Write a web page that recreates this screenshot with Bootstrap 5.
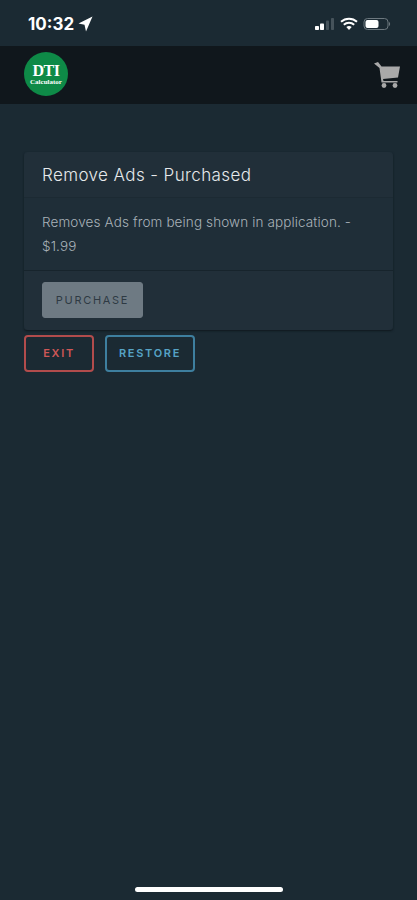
<!DOCTYPE html>
<html lang="en">
<head>
  <meta charset="UTF-8">
  <title>Remove Ads</title>
  <meta name="viewport" content="width=device-width, initial-scale=1">
  <link href="https://cdn.jsdelivr.net/npm/bootstrap@5.3.3/dist/css/bootstrap.min.css" rel="stylesheet">
  <style>
    html, body { height: 100%; }
    body { background: #1b2a33; font-family: "Inter", "Liberation Sans", sans-serif; color: #dfe3e6; }
    .page-wrap { height: 900px; overflow: hidden; }
    .status-row { height: 46px; padding: 10px 26px 0 28px; color: #fff; }
    .status-time { font-size: 17px; font-weight: 700; line-height: 28px; }
    .status-icons { gap: 5px; padding-top: 7px; }
    .top-bar { height: 58px; background: #10171c; padding: 0 17px 0 24px; }
    .app-logo { width: 44px; height: 44px; border-radius: 50%; background: #0e8a47; color: #fff; margin-top: -2px; }
    .logo-big { font-family: "Liberation Serif", serif; font-weight: 700; font-size: 16px; line-height: 15px; letter-spacing: -.5px; }
    .logo-small { font-family: "Liberation Serif", serif; font-weight: 700; font-size: 7px; line-height: 8px; }
    .content-area { padding: 48px 24px 0; }
    .ads-card { background: #1f2e38; border: 0; border-radius: 3px; box-shadow: 0 1px 2px #0f181e; }
    .ads-card .card-header { background: #212f39; border-bottom: 1px solid #1c2a33; height: 46px; padding: 0 18px; font-size: 17px; font-weight: 300; line-height: 46px; letter-spacing: .4px; color: #e6e9eb; }
    .ads-card .card-body { padding: 12px 18px 0; height: 72px; font-size: 13.5px; font-weight: 300; line-height: 24px; letter-spacing: .12px; color: #a9b2b8; }
    .ads-card .card-footer { background: #212f39; border-top: 1px solid #17242c; height: 60px; padding: 11px 18px 0; }
    .btn-buy, .btn-exit, .btn-restore { font-size: 11px; letter-spacing: 1.7px; text-transform: uppercase; padding: 0; }
    .btn-buy { width: 101px; height: 36px; border-radius: 3px; font-weight: 400; }
    .btn-buy:disabled { background: #6e7a83; border: 1px solid #6e7a83; color: #2e3a43; opacity: 1; }
    .exit-row { margin-top: 5px; gap: 11px; }
    .btn-exit { width: 70px; height: 37px; border: 2px solid #b24c4c; border-radius: 4px; color: #cf5757; background: transparent; font-weight: 600; }
    .btn-restore { width: 90px; height: 37px; border: 2px solid #3e7f9f; border-radius: 4px; color: #56a3c6; background: transparent; font-weight: 600; }
    .home-line { position: fixed; left: 135px; top: 887px; width: 148px; height: 5px; border-radius: 3px; background: #fff; }
  </style>
</head>
<body>
  <div class="page-wrap">
    <div class="status-row d-flex justify-content-between align-items-start">
      <div class="d-flex align-items-center gap-1">
        <span class="status-time">10:32</span>
        <svg width="15" height="16" viewBox="0 0 15 16"><path d="M14.500 .5 L.5 7.500 L6.500 8.800 L8 15.500 Z" fill="#fff"/></svg>
      </div>
      <div class="status-icons d-flex align-items-start">
        <svg width="20" height="14" viewBox="0 0 20 14">
          <rect x="0" y="9" width="4" height="4" rx=".8" fill="#fff"/>
          <rect x="5" y="6.500" width="4" height="6.500" rx=".8" fill="#fff"/>
          <rect x="11" y="3.500" width="3" height="9.500" rx=".8" fill="#46535b"/>
          <rect x="16" y="1" width="3" height="12" rx=".8" fill="#46535b"/>
        </svg>
        <svg width="18" height="14" viewBox="0 0 18 14">
          <path d="M1 4.800 C5.500 .6 12.500 .6 17 4.800" fill="none" stroke="#fff" stroke-width="2"/>
          <path d="M3.800 7.700 C6.800 5 11.200 5 14.200 7.700" fill="none" stroke="#fff" stroke-width="2"/>
          <path d="M6.300 10 L9 13 L11.700 10 C10 8.700 8 8.700 6.300 10 Z" fill="#fff"/>
        </svg>
        <svg width="28" height="14" viewBox="0 0 28 14">
          <rect x="1" y="1.500" width="24" height="11" rx="3.500" fill="none" stroke="#6d787f"/>
          <rect x="2.500" y="3" width="13" height="8" rx="2" fill="#fff"/>
          <path d="M26 5 C27.500 5.500 27.500 8.500 26 9 Z" fill="#6d787f"/>
        </svg>
      </div>
    </div>

    <nav class="top-bar d-flex justify-content-between align-items-center">
      <div class="app-logo d-flex flex-column align-items-center justify-content-center">
        <span class="logo-big">DTI</span>
        <span class="logo-small">Calculator</span>
      </div>
      <svg width="26" height="26" viewBox="0 0 26 26">
        <path d="M0 1.500 L4 0 L7.500 4.500 L26 4.500 L24 15.500 L9 17 L9.500 19 L23.500 19 L23.500 20.500 L7.500 20.500 L5.500 6 Z" fill="#a9a9a9"/>
        <circle cx="10" cy="23.500" r="2.400" fill="#a9a9a9"/>
        <circle cx="21" cy="23.500" r="2.400" fill="#a9a9a9"/>
      </svg>
    </nav>

    <main class="content-area">
      <div class="card ads-card">
        <div class="card-header">Remove Ads - Purchased</div>
        <div class="card-body">Removes Ads from being shown in application. - $1.99</div>
        <div class="card-footer">
          <button type="button" class="btn btn-buy" disabled>Purchase</button>
        </div>
      </div>
      <div class="d-flex exit-row">
        <button type="button" class="btn btn-exit">Exit</button>
        <button type="button" class="btn btn-restore">Restore</button>
      </div>
    </main>
  </div>
  <div class="home-line"></div>
  <script src="https://cdn.jsdelivr.net/npm/bootstrap@5.3.3/dist/js/bootstrap.bundle.min.js"></script>
</body>
</html>
